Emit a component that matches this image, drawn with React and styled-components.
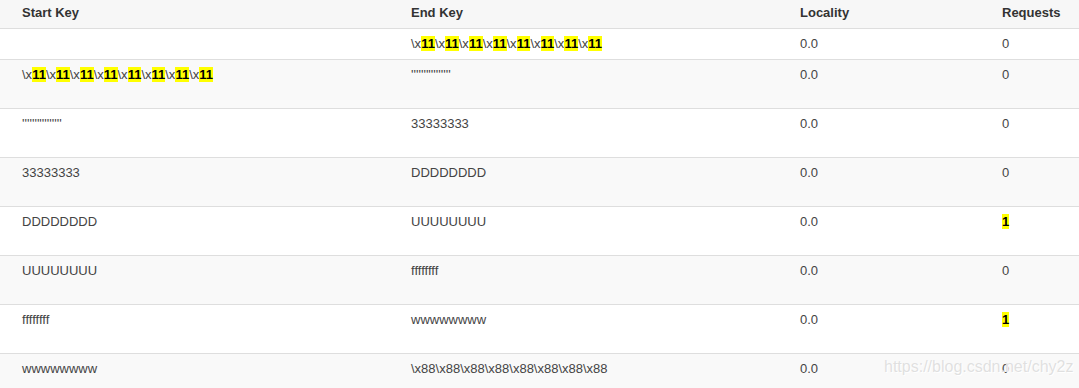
import styled, { createGlobalStyle } from "styled-components"

const GlobalStyle = createGlobalStyle`
  body {
    margin: 0;
    background: #fff;
    font-family: "Liberation Sans", Arial, sans-serif;
  }
`

const rows = [
  { start: "", end: "\\x11\\x11\\x11\\x11\\x11\\x11\\x11\\x11", locality: "0.0", requests: "0", tall: false },
  { start: "\\x11\\x11\\x11\\x11\\x11\\x11\\x11\\x11", end: "''''''''''''''''", locality: "0.0", requests: "0", tall: true },
  { start: "''''''''''''''''", end: "33333333", locality: "0.0", requests: "0", tall: true },
  { start: "33333333", end: "DDDDDDDD", locality: "0.0", requests: "0", tall: true },
  { start: "DDDDDDDD", end: "UUUUUUUU", locality: "0.0", requests: "1", tall: true },
  { start: "UUUUUUUU", end: "ffffffff", locality: "0.0", requests: "0", tall: true },
  { start: "ffffffff", end: "wwwwwwww", locality: "0.0", requests: "1", tall: true },
  { start: "wwwwwwww", end: "\\x88\\x88\\x88\\x88\\x88\\x88\\x88\\x88", locality: "0.0", requests: "0", tall: true },
]

// wrap every "11" the search matched in a yellow mark
const Highlighted = ({ text, match }) => {
  if (!match || !text.includes(match)) return text
  const parts = text.split(match)
  return parts.map((p, i) => (
    <span key={i}>
      {p}
      {i < parts.length - 1 && <Mark>{match}</Mark>}
    </span>
  ))
}

export default function App() {
  return (
    <>
      <GlobalStyle />
      <Table>
        <HeaderRow>
          <HeadCell>Start Key</HeadCell>
          <HeadCell>End Key</HeadCell>
          <HeadCell>Locality</HeadCell>
          <HeadCell>Requests</HeadCell>
        </HeaderRow>
        {rows.map((r, i) => (
          <Row key={i} $tall={r.tall} $striped={i % 2 === 1}>
            <Cell><Highlighted text={r.start} match="11" /></Cell>
            <Cell><Highlighted text={r.end} match="11" /></Cell>
            <Cell>{r.locality}</Cell>
            <Cell>{r.requests === "1" ? <Mark>1</Mark> : r.requests}</Cell>
          </Row>
        ))}
        <Watermark>https://blog.csdn.net/chy2z</Watermark>
      </Table>
    </>
  )
}

const Table = styled.div`
  position: relative;
  width: 1079px;
  height: 388px;
  overflow: hidden;
  font-size: 13px;
`

const HeaderRow = styled.div`
  display: grid;
  grid-template-columns: 389px 389px 202px 1fr;
  height: 28px;
  background: #f7f7f7;
  border-bottom: 1px solid #dedede;
`

const HeadCell = styled.div`
  padding-left: 22px;
  line-height: 26px;
  font-weight: bold;
  color: #333;
`

const Row = styled.div`
  display: grid;
  grid-template-columns: 389px 389px 202px 1fr;
  height: ${props => props.$tall ? "48px" : "30px"};
  background: ${props => props.$striped ? "#f9f9f9" : "#fff"};
  border-bottom: 1px solid #dedede;
`

const Cell = styled.div`
  padding: 7px 0 0 22px;
  line-height: 16px;
  color: #444;
  white-space: nowrap;
`

const Mark = styled.span`
  background: #ffff00;
  color: #000;
  font-weight: bold;
`

const Watermark = styled.div`
  position: absolute;
  left: 884px;
  top: 358px;
  font-size: 16px;
  color: rgba(210, 210, 210, 0.7);
  text-shadow: 0 0 1px #fff, 1px 1px 0 #fff;
  pointer-events: none;
`
